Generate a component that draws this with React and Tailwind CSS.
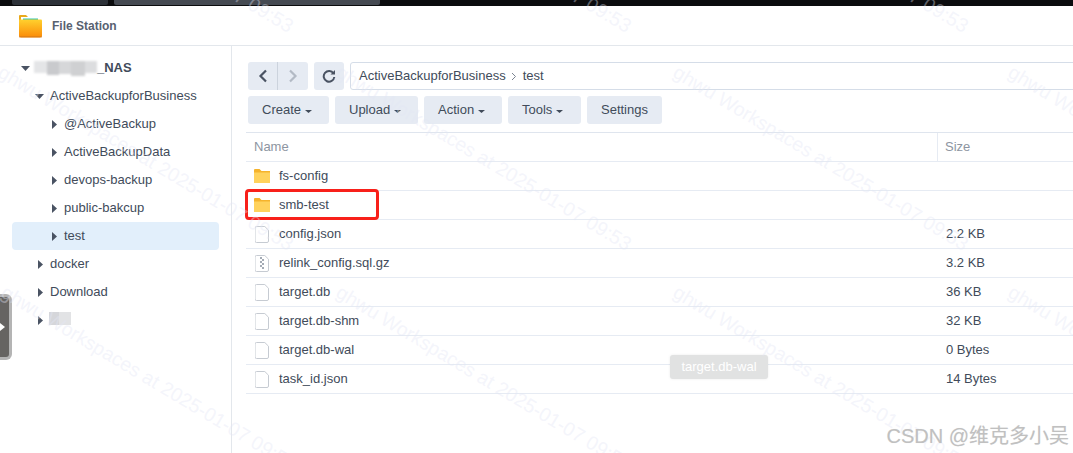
import React from 'react';

const font = { fontFamily: '"Liberation Sans", "Noto Sans CJK SC", sans-serif' };

const tree = [
  { label: 'ActiveBackupforBusiness', open: true },
  { label: '@ActiveBackup', deep: true },
  { label: 'ActiveBackupData', deep: true },
  { label: 'devops-backup', deep: true },
  { label: 'public-bakcup', deep: true },
  { label: 'test', deep: true, active: true },
  { label: 'docker' },
  { label: 'Download' },
];

const files = [
  { name: 'fs-config', type: 'folder', size: '' },
  { name: 'smb-test', type: 'folder', size: '' },
  { name: 'config.json', type: 'file', size: '2.2 KB' },
  { name: 'relink_config.sql.gz', type: 'zip', size: '3.2 KB' },
  { name: 'target.db', type: 'file', size: '36 KB' },
  { name: 'target.db-shm', type: 'file', size: '32 KB' },
  { name: 'target.db-wal', type: 'file', size: '0 Bytes' },
  { name: 'task_id.json', type: 'file', size: '14 Bytes' },
];

const watermarks = [
  [0, -162], [338, -162], [675, -162], [1010, -162],
  [0, 56], [338, 56], [675, 56], [1010, 56],
  [3, 276], [338, 276], [675, 276], [1010, 276],
];

const ArrowDown = () => (
  <svg width="9" height="5" viewBox="0 0 9 5" className="shrink-0"><path d="M0 0h9L4.5 5z" fill="#4a5363" /></svg>
);

const ArrowRight = () => (
  <svg width="5" height="9" viewBox="0 0 5 9" className="shrink-0"><path d="M0 0l5 4.5L0 9z" fill="#4a5363" /></svg>
);

const Caret = () => (
  <svg width="7" height="3" viewBox="0 0 7 3" className="ml-[4px] mt-[2px]"><path d="M0 0h7L3.5 3z" fill="#414b5a" /></svg>
);

const FolderIcon = () => (
  <svg width="16" height="14" viewBox="0 0 16 14" className="shrink-0">
    <path d="M0 1a1 1 0 0 1 1-1h4.500l2 2H16v2H0z" fill="#f5b32c" />
    <path d="M0 3.500h16V14H0z" fill="#ffd25c" />
  </svg>
);

const FileIcon = ({ zip }) => (
  <svg width="14" height="17" viewBox="0 0 14 17" className="shrink-0">
    <path d="M1.500.5h8.300l3.700 3.700v10.800a1.500 1.500 0 0 1-1.500 1.500h-10.500a1.500 1.500 0 0 1-1.500-1.500v-13a1.500 1.500 0 0 1 1.500-1.500z" fill="#fff" stroke="#c6cbd2" />
    {zip && <path d="M5 2h2v2h-2zM7 4h2v2h-2zM5 6h2v2h-2zM7 8h2v2h-2zM5 10h2v2h-2zM7 12h2v2h-2z" fill="#a4abb5" />}
  </svg>
);

const AppIcon = () => (
  <svg width="25" height="25" viewBox="0 0 25 25" className="shrink-0">
    <defs>
      <linearGradient id="fsbody" x1="0" y1="0" x2="0" y2="1">
        <stop offset="0" stopColor="#ffd12e" />
        <stop offset="1" stopColor="#fb8a07" />
      </linearGradient>
    </defs>
    <path d="M1 3a1 1 0 0 1 1-1h6l2 2h12v6H1z" fill="#e9a91c" />
    <path d="M3 4h19v6H3z" fill="#fff" />
    <path d="M5 5.500h15v1.500H5z" fill="#35c4a8" />
    <path d="M1 7.500q0-1 1-1h21q1 0 1 1v15q0 2-2 2H3q-2 0-2-2z" fill="url(#fsbody)" />
    <path d="M1 23h23v1.500H1z" fill="#d0791a" opacity="0.6" />
  </svg>
);

const ToolButton = ({ label, caret, className }) => (
  <button className={`h-7 pl-[14px] flex items-center justify-start bg-[#e6ebf3] rounded-[3px] text-[13px] text-[#414b5a] ${className}`}>
    {label}
    {caret && <Caret />}
  </button>
);

export default function App() {
  return (
    <div style={font} className="relative w-[1073px] h-[453px] overflow-hidden bg-white text-[13px] text-[#414b5a]">
      {/* dark strip left from the desktop behind the window */}
      <div className="h-[6px] bg-[#0b0c0e] flex pl-[12px]">
        <div className="w-[96px] h-[5px] bg-[#2d3239] rounded-b-[2px]" />
        <div className="w-[266px] h-[5px] ml-[6px] bg-[#454a52] rounded-b-[2px]" />
      </div>

      <div className="h-[40px] border-b border-[#e3e7ec] flex items-center pl-[18px]">
        <AppIcon />
        <span className="ml-[9px] text-[12px] font-bold text-[#586170]">File Station</span>
      </div>

      <div className="flex h-[407px]">
        <aside className="w-[232px] shrink-0 border-r border-[#e3e7ec] pt-[8px] px-[12px]">
          <div className="h-7 flex items-center pl-[9px]">
            <ArrowDown />
            <span className="ml-[4px] flex items-start h-[15px] blur-[1px]">
              <span className="w-[13px] h-[12px] bg-[#e4e5e7]" />
              <span className="w-[12px] h-[14px] bg-[#c9cacd]" />
              <span className="w-[12px] h-[13px] bg-[#d6d7d9]" />
              <span className="w-[14px] h-[15px] bg-[#cfd0d2]" />
              <span className="w-[12px] h-[12px] bg-[#dcdddf]" />
            </span>
            <span className="font-bold text-[#414b5a]">_NAS</span>
          </div>
          {tree.map((item) => (
            <div
              key={item.label}
              className={`h-7 flex items-center rounded-[4px] ${item.active ? 'bg-[#e2effb]' : ''}`}
            >
              <div className={`flex items-center ${item.open ? 'pl-[23px]' : item.deep ? 'pl-[40px]' : 'pl-[26px]'}`}>
                {item.open ? <ArrowDown /> : <ArrowRight />}
                <span className={item.open ? 'ml-[6px]' : 'ml-[7px]'}>{item.label}</span>
              </div>
            </div>
          ))}
          <div className="h-7 flex items-center pl-[26px]">
            <ArrowRight />
            <span className="ml-[6px] flex h-[13px] -mt-[3px]">
              <span className="w-[10px] bg-[#d5d6da]" />
              <span className="w-[12px] bg-[#e2e3e5]" />
            </span>
          </div>
        </aside>

        <main className="flex-1 min-w-0 pl-[14px] pt-[16px]">
          <div className="pl-[2px] flex gap-[6px]">
            <div className="flex h-7 bg-[#e6ebf3] rounded-[3px] w-[60px] shrink-0">
              <button className="w-[30px] flex items-center justify-center border-r border-[#ccd3dd]">
                <svg width="10" height="14" viewBox="0 0 10 14"><path d="M8 1.500L2.500 7 8 12.500" fill="none" stroke="#4a5363" strokeWidth="2.200" /></svg>
              </button>
              <button className="flex-1 flex items-center justify-center">
                <svg width="10" height="14" viewBox="0 0 10 14"><path d="M2 1.500L7.500 7 2 12.500" fill="none" stroke="#b3bac5" strokeWidth="2.200" /></svg>
              </button>
            </div>
            <button className="w-[30px] h-7 shrink-0 bg-[#e6ebf3] rounded-[3px] flex items-center justify-center">
              <svg width="14" height="14" viewBox="0 0 14 14">
                <path d="M11.500 4.500A5.300 5.300 0 1 0 12.300 8" fill="none" stroke="#4a5363" strokeWidth="2" />
                <path d="M8.500 5.500h4.500V1z" fill="#4a5363" />
              </svg>
            </button>
            <div className="flex-1 h-7 -mr-[10px] flex items-center pl-[8px] border border-[#d5dde8] rounded-[3px]">
              ActiveBackupforBusiness
              <svg width="6" height="9" viewBox="0 0 6 9" className="ml-[5px] mr-[6px]"><path d="M1 1l3.500 3.500L1 8" fill="none" stroke="#7b8492" /></svg>
              test
            </div>
          </div>

          <div className="pl-[2px] mt-[6px] flex gap-[6px]">
            <ToolButton label="Create" caret className="w-[81px]" />
            <ToolButton label="Upload" caret className="w-[83px]" />
            <ToolButton label="Action" caret className="w-[78px]" />
            <ToolButton label="Tools" caret className="w-[73px]" />
            <ToolButton label="Settings" className="w-[75px]" />
          </div>

          <div className="mt-[8px] border-t border-[#dfe5ee]">
            <div className="h-[29px] flex items-center border-b border-[#e6ebf3] text-[#8d95a1]">
              <div className="w-[692px] h-full pl-[8px] flex items-center border-r border-[#e6ebf3]">Name</div>
              <div className="pl-[7px]">Size</div>
            </div>
            {files.map((file) => (
              <div key={file.name} className="h-[29px] flex items-center border-b border-[#e6ebf3]">
                <div className="w-[692px] pl-[8px] flex items-center">
                  <span className="w-[17px] flex justify-start">
                    {file.type === 'folder' ? <FolderIcon /> : <span className="pl-[1px]"><FileIcon zip={file.type === 'zip'} /></span>}
                  </span>
                  <span className="ml-[8px]">{file.name}</span>
                </div>
                <div className="pl-[8px]">{file.size}</div>
              </div>
            ))}
          </div>
        </main>
      </div>

      {/* red highlight around smb-test */}
      <div className="absolute left-[245px] top-[189px] w-[134px] h-[31px] border-[3px] border-[#f8201a] rounded-[4px]" />

      {/* tooltip */}
      <div className="absolute left-[670px] top-[355px] w-[98px] h-[24px] flex items-center justify-center rounded-[3px] bg-[#e1e2e2] text-white shadow-[0_0_3px_rgba(0,0,0,0.08)]">
        target.db-wal
      </div>

      {/* side handle */}
      <div className="absolute left-0 top-[294px] w-[12px] h-[66px] flex items-center bg-[#666462] border-[3px] border-l-0 border-[#b4b4b4] rounded-r-[6px]">
        <svg width="5" height="8" viewBox="0 0 5 8"><path d="M0 0l5 4-5 4z" fill="#fff" /></svg>
      </div>

      {/* repeated watermark */}
      <div className="absolute inset-0 pointer-events-none">
        {watermarks.map(([x, y]) => (
          <div
            key={`${x}-${y}`}
            style={{ left: x, top: y, transform: 'rotate(31deg)', transformOrigin: '0 50%' }}
            className="absolute whitespace-nowrap text-[19.5px] text-[#e3e6f5]/40"
          >
            ghwu Workspaces at 2025-01-07 09:53
          </div>
        ))}
      </div>

      <div className="absolute right-[4px] bottom-[2px] text-[20px] text-[#c0c0c0] [text-shadow:0_0_1px_#e8e8e8]">
        CSDN @维克多小吴
      </div>
    </div>
  );
}
